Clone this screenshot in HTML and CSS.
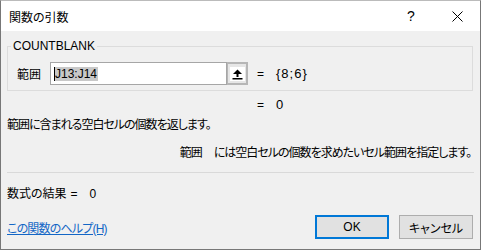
FILE: index.html
```html
<!DOCTYPE html>
<html lang="ja">
<head>
  <meta charset="UTF-8">
  <title>関数の引数</title>
  <link rel="stylesheet" href="styles.css">
</head>
<body>

<div class="dialog">
  <!-- Barra de título -->
  <div class="titlebar">
    <span class="title">関数の引数</span>
    <span class="tb-btn help">?</span>
    <span class="tb-btn close">
      <svg width="11" height="11" viewBox="0 0 11 11"><path d="M0.5 0.5 L10.5 10.5 M10.5 0.5 L0.5 10.5" stroke="#000" stroke-width="1" fill="none"/></svg>
    </span>
  </div>

  <div class="content">
    <!-- Grupo de argumentos -->
    <fieldset class="group">
      <legend>COUNTBLANK</legend>
      <div class="arg-row">
        <span class="arg-label">範囲</span>
        <div class="ref-input"><span class="caret"></span><span class="sel">J13:J14</span></div>
        <span class="ref-btn">
          <span class="ref-icon">
            <svg width="15" height="14" viewBox="0 0 15 14"><path d="M7.5 2.5 L12 7 L3 7 Z" fill="#000"/><rect x="6.5" y="7" width="2" height="3" fill="#000"/><rect x="2.5" y="11" width="10" height="1.5" fill="#000"/></svg>
          </span>
        </span>
        <span class="eq">=</span>
        <span class="val">{8;6}</span>
      </div>
    </fieldset>

    <div class="eq-row"><span class="eq">=</span><span class="val">0</span></div>

    <p class="desc">範囲に含まれる空白セルの個数を返します。</p>
    <p class="arg-desc"><span class="arg-name">範囲</span>には空白セルの個数を求めたいセル範囲を指定します。</p>

    <hr class="sep">

    <div class="result"><span>数式の結果</span><span class="res-eq">=</span><span>0</span></div>

    <div class="footer">
      <a href="#" class="help-link">この関数のヘルプ(H)</a>
      <div class="actions">
        <button class="btn primary">OK</button>
        <button class="btn">キャンセル</button>
      </div>
    </div>
  </div>
</div>

</body>
</html>
```

FILE: styles.css
```css
/* Cuadro de diálogo */
body {
  margin: 0;
  font-family: "Liberation Sans", "Noto Sans CJK JP", sans-serif;
  font-size: 12px;
  color: #000;
  font-feature-settings: "palt";
}

.dialog {
  width: 481px;
  height: 250px;
  box-sizing: border-box;
  border: 1px solid #777;
  border-top-color: #bbb;
  background: #f0f0f0;
  overflow: hidden;
}

.titlebar {
  height: 30px;
  background: #fff;
  display: flex;
  align-items: center;
}

.title {
  flex: 1;
  padding-left: 8px;
  font-size: 12px;
}

.tb-btn {
  width: 46px;
  height: 30px;
  display: flex;
  align-items: center;
  justify-content: center;
}

.help {
  font-size: 14px;
}

.content {
  padding: 0 7px 0 6px;
}

.group {
  margin: 8px 0 0 0;
  padding: 9px 0 5px 9px;
  border: 1px solid #dcdcdc;
  min-width: 0;
}

.group legend {
  margin-left: -6px;
  padding: 0 2px;
  line-height: 14px;
  font-size: 12px;
}

.arg-row {
  display: flex;
  align-items: center;
  height: 23px;
}

.arg-label {
  width: 33px;
}

.ref-input {
  width: 177px;
  height: 23px;
  box-sizing: border-box;
  border: 1px solid #a6a6a6;
  background: #fff;
  display: flex;
  align-items: center;
  padding-left: 3px;
}

.caret {
  width: 1px;
  height: 14px;
  background: #000;
}

.sel {
  background: #c8c8c8;
  font-family: "Liberation Sans", sans-serif;
  font-size: 12px;
  line-height: 14px;
  padding-right: 1px;
}

.ref-btn {
  width: 21px;
  height: 23px;
  box-sizing: border-box;
  border: 2px solid #b6b6b6;
  border-left-width: 1px;
  background: #e6e6e6;
  display: flex;
  align-items: center;
  justify-content: center;
}

.ref-icon {
  width: 15px;
  height: 14px;
  background: #fff;
  display: flex;
}

.eq {
  width: 19px;
  margin-left: 9px;
  font-size: 12px;
}

.val {
  font-size: 13px;
  letter-spacing: 1px;
}

.eq-row {
  margin-top: 6px;
  padding-left: 241px;
  display: flex;
  line-height: 16px;
}

.desc, .arg-desc {
  margin: 0;
  line-height: 16px;
  letter-spacing: -1px;
}

.desc {
  margin-top: 4px;
}

.arg-desc {
  margin-top: 12px;
  text-align: right;
  padding-right: 2px;
}

.arg-name {
  margin-right: 12px;
}

.sep {
  margin: 11px -1px 0 0;
  border: none;
  border-top: 1px solid #d9d9d9;
}

.result {
  margin-top: 13px;
  line-height: 16px;
  display: flex;
}

.res-eq {
  margin: 0 12px 0 4px;
}

.footer {
  margin-top: 13px;
  display: flex;
  align-items: center;
  justify-content: space-between;
}

.help-link {
  color: #1366c6;
  text-decoration: underline;
  letter-spacing: -0.8px;
}

.actions {
  display: flex;
  gap: 10px;
}

.btn {
  width: 74px;
  height: 24px;
  box-sizing: border-box;
  border: 1px solid #adadad;
  background: #e1e1e1;
  font-family: "Liberation Sans", "Noto Sans CJK JP", sans-serif;
  font-size: 12px;
  font-feature-settings: "palt";
  padding: 0;
}

.btn.primary {
  border: 2px solid #0078d7;
}
```
